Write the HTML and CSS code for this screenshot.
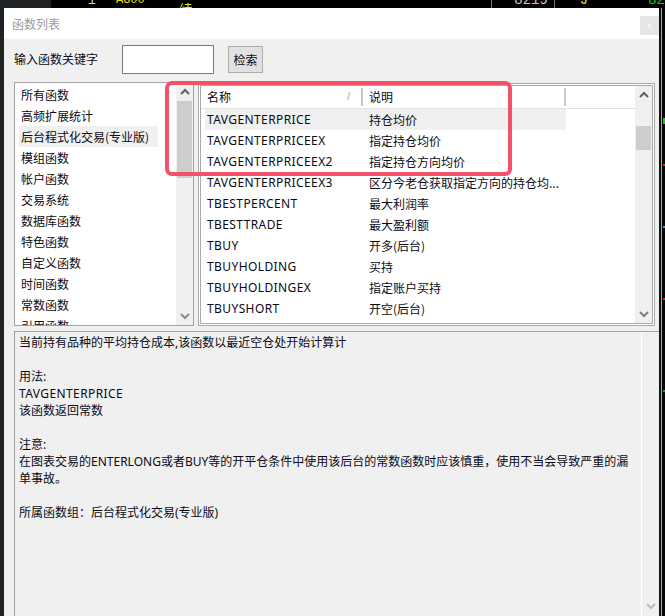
FILE: index.html
```html
<!DOCTYPE html>
<html lang="zh-CN">
<head>
<meta charset="utf-8">
<title>函数列表</title>
<link rel="stylesheet" href="styles.css">
</head>
<body>
<div class="topstrip">
  <div class="ticker">
    <span class="tk-gray"></span>
    <span class="tk-num">1</span>
    <span class="tk-code">AG00</span>
    <span class="tk-name">白银连续</span>
    <span class="tk-bar1"></span>
    <span class="tk-price">8219</span>
    <span class="tk-bar2"></span>
    <span class="tk-j">J</span>
    <span class="tk-g">82</span>
  </div>
</div>
<div class="main">
  <div class="lside"></div>
  <div class="dialog">
    <div class="titlebar">
      <span class="title">函数列表</span>
      <span class="close">x</span>
    </div>
    <div class="search">
      <span class="label">输入函数关键字</span>
      <span class="input"></span>
      <span class="btn">检索</span>
    </div>
    <div class="lists">
      <div class="catlist">
        <div class="catitems">
          <div class="cat">所有函数</div>
          <div class="cat">高频扩展统计</div>
          <div class="cat sel">后台程式化交易(专业版)</div>
          <div class="cat">模组函数</div>
          <div class="cat">帐户函数</div>
          <div class="cat">交易系统</div>
          <div class="cat">数据库函数</div>
          <div class="cat">特色函数</div>
          <div class="cat">自定义函数</div>
          <div class="cat">时间函数</div>
          <div class="cat">常数函数</div>
          <div class="cat">引用函数</div>
        </div>
        <div class="vscroll">
          <span class="arrow"><svg width="10" height="7" viewBox="0 0 10 7"><polyline points="1,6 5,2 9,6" fill="none" stroke="#606060" stroke-width="2"/></svg></span>
          <span class="thumb thumb-left"></span>
          <span class="grow"></span>
          <span class="arrow"><svg width="10" height="7" viewBox="0 0 10 7"><polyline points="1,1 5,5 9,1" fill="none" stroke="#8a8a8a" stroke-width="2"/></svg></span>
        </div>
      </div>
      <div class="fnlist">
        <div class="fninner">
          <div class="fnmain">
            <div class="fnhead">
              <div class="hc hc1"><span>名称</span><span class="sort">/</span></div>
              <div class="hc hc2"><span>说明</span></div>
              <div class="hc hc3"></div>
            </div>
            <div class="rows">
              <div class="row hl"><span class="c1">TAVGENTERPRICE</span><span class="c2">持仓均价</span></div>
              <div class="row"><span class="c1">TAVGENTERPRICEEX</span><span class="c2">指定持仓均价</span></div>
              <div class="row"><span class="c1">TAVGENTERPRICEEX2</span><span class="c2">指定持仓方向均价</span></div>
              <div class="row"><span class="c1">TAVGENTERPRICEEX3</span><span class="c2">区分今老仓获取指定方向的持仓均...</span></div>
              <div class="row"><span class="c1">TBESTPERCENT</span><span class="c2">最大利润率</span></div>
              <div class="row"><span class="c1">TBESTTRADE</span><span class="c2">最大盈利额</span></div>
              <div class="row"><span class="c1">TBUY</span><span class="c2">开多(后台)</span></div>
              <div class="row"><span class="c1">TBUYHOLDING</span><span class="c2">买持</span></div>
              <div class="row"><span class="c1">TBUYHOLDINGEX</span><span class="c2">指定账户买持</span></div>
              <div class="row"><span class="c1">TBUYSHORT</span><span class="c2">开空(后台)</span></div>
            </div>
          </div>
          <div class="vscroll vs2">
            <span class="arrow"><svg width="10" height="7" viewBox="0 0 10 7"><polyline points="1,6 5,2 9,6" fill="none" stroke="#606060" stroke-width="2"/></svg></span>
            <span class="thumb thumb-right"></span>
            <span class="grow"></span>
            <span class="arrow"><svg width="10" height="7" viewBox="0 0 10 7"><polyline points="1,1 5,5 9,1" fill="none" stroke="#808080" stroke-width="2"/></svg></span>
          </div>
        </div>
      </div>
    </div>
    <div class="desc">
      <div class="desctext">当前持有品种的平均持仓成本,该函数以最近空仓处开始计算计

用法:
<span class="lat">TAVGENTERPRICE</span>
该函数返回常数

注意:
在图表交易的ENTERLONG或者BUY等的开平仓条件中使用该后台的常数函数时应该慎重，使用不当会导致严重的漏
单事故。

所属函数组：后台程式化交易(专业版)</div>
      <div class="vscroll vs3">
        <span class="grow"></span>
        <span class="arrow"><svg width="10" height="7" viewBox="0 0 10 7"><polyline points="1,1 5,5 9,1" fill="none" stroke="#bdbdbd" stroke-width="2"/></svg></span>
      </div>
    </div>
  </div>
  <div class="rside">
    <span class="mk mk-g"></span>
    <span class="mk mk-r"></span>
    <span class="mk mk-b"></span>
    <span class="mk mk-r2"></span>
    <span class="mk mk-g2"></span>
  </div>
</div>
<div class="annot"></div>
</body>
</html>
```

FILE: styles.css
```css
* { box-sizing: border-box; }
html, body { margin: 0; padding: 0; }
body {
  width: 665px;
  height: 616px;
  overflow: hidden;
  background: #1f2326;
  font-family: "Noto Sans", "Noto Sans CJK SC", sans-serif;
  font-size: 12px;
  color: #0a0a14;
  position: relative;
}

/* background ticker strip */
.topstrip {
  height: 8px;
  overflow: hidden;
  background: #000;
}
.ticker {
  display: flex;
  align-items: center;
  height: 18px;
  margin-top: -9px;
  font-family: "Liberation Mono", monospace;
  font-size: 14px;
  line-height: 18px;
}
.tk-gray { width: 58px; height: 18px; background: #1f2326; }
.tk-num { color: #c8c8c8; margin-left: 36px; }
.tk-code { color: #e6e600; margin-left: 20px; font-size: 12px; }
.tk-name { color: #e6e600; margin-left: 34px; font-family: "Noto Sans CJK SC", sans-serif; font-size: 14px; }
.tk-bar1 { width: 1px; height: 18px; background: #5b78b8; margin-left: 263px; }
.tk-price { color: #c8c8c8; margin-left: 22px; }
.tk-bar2 { width: 1px; height: 18px; background: #777; margin-left: 6px; }
.tk-j { color: #e6e600; margin-left: 25px; }
.tk-g { color: #19c819; margin-left: 60px; }

.main {
  display: flex;
  height: 608px;
}
.lside { width: 4px; background: #1f2326; }
.rside {
  width: 6px;
  background: #050505;
  display: flex;
  flex-direction: column;
  border-left: 2px solid #111;
  box-shadow: inset 1px 0 0 #9aa6b4;
}
.mk { display: block; width: 3px; height: 2px; margin-left: 2px; }
.mk-g { background: #19c819; margin-top: 110px; height: 6px; }
.mk-r { background: #c83232; margin-top: 40px; }
.mk-b { background: #6f89c0; margin-top: 60px; }
.mk-r2 { background: #c83232; margin-top: 70px; }
.mk-g2 { background: #19a019; margin-top: 90px; }

.dialog {
  width: 655px;
  background: #f0f0f0;
  display: flex;
  flex-direction: column;
}

.titlebar {
  height: 31px;
  background: #fff;
  display: flex;
  align-items: center;
  justify-content: space-between;
  padding-left: 8px;
}
.title {
  color: #9a9a9a;
  font-family: "Noto Sans CJK SC", sans-serif;
  font-size: 12px;
  margin-top: -1px;
}
.close {
  align-self: flex-start;
  margin-top: 8px;
  width: 19px;
  height: 19px;
  background: #e6e6e6;
  color: #fafafa;
  font-size: 11px;
  line-height: 18px;
  text-align: center;
}

.search {
  height: 43px;
  display: flex;
  align-items: flex-start;
  padding: 6px 0 0 10px;
}
.label {
  width: 108px;
  line-height: 28px;
  font-family: "Noto Sans CJK SC", sans-serif;
}
.input {
  width: 92px;
  height: 29px;
  background: #fff;
  border: 1px solid #7a7a7a;
}
.btn {
  margin: 1px 0 0 14px;
  width: 35px;
  height: 27px;
  background: #e1e1e1;
  border: 1px solid #adadad;
  font-family: "Noto Sans CJK SC", sans-serif;
  line-height: 25px;
  text-align: center;
}

.lists {
  display: flex;
  align-items: flex-start;
  padding-left: 10px;
  height: 249px;
}

.catlist {
  width: 180px;
  height: 244px;
  border: 1px solid #a0a0a0;
  background: #fff;
  display: flex;
  overflow: hidden;
}
.catitems {
  flex: 1;
  display: flex;
  flex-direction: column;
  align-items: flex-start;
  padding: 1px 0 0 4px;
  overflow: hidden;
}
.cat {
  height: 21px;
  line-height: 21px;
  padding: 0 9px 0 2px;
  font-family: "Noto Sans CJK SC", sans-serif;
  white-space: nowrap;
  flex: none;
}
.cat.sel { background: #f0f0f0; }

.vscroll {
  width: 17px;
  background: #f0f0f0;
  display: flex;
  flex-direction: column;
  align-items: center;
}
.arrow {
  width: 17px;
  height: 17px;
  display: flex;
  align-items: center;
  justify-content: center;
  flex: none;
}
.grow { flex: 1; }
.thumb { width: 15px; background: #cdcdcd; flex: none; }
.thumb-left { height: 77px; margin-top: 1px; }
.thumb-right { height: 24px; margin-top: 23px; }

.fnlist {
  width: 457px;
  height: 243px;
  margin: 1px 0 0 4px;
  border: 1px solid #a9a9a9;
  background: #fff;
  padding: 1px;
}
.fninner {
  height: 100%;
  border: 1px solid #a9a9a9;
  display: flex;
  overflow: hidden;
}
.fnmain {
  flex: 1;
  display: flex;
  flex-direction: column;
  overflow: hidden;
}
.fnhead {
  height: 23px;
  display: flex;
  border-bottom: 1px solid #e3e3e3;
  flex: none;
}
.hc {
  display: flex;
  align-items: center;
  justify-content: space-between;
  font-family: "Noto Sans CJK SC", sans-serif;
  padding: 0 0 1px 6px;
}
.hc1 { width: 162px; border-right: 2px solid #c9c9c9; margin: 2px 0; padding-right: 11px; }
.hc2 { width: 203px; border-right: 2px solid #c9c9c9; margin: 2px 0; }
.hc3 { flex: 1; }
.sort { color: #9a9a9a; font-size: 10px; font-family: "Liberation Sans", sans-serif; }

.rows {
  display: flex;
  flex-direction: column;
  padding-left: 4px;
}
.row {
  width: 361px;
  height: 21px;
  line-height: 21px;
  display: flex;
  white-space: nowrap;
  flex: none;
}
.row.hl { background: #f0f0f0; }
.c1 { width: 158px; padding-left: 2px; letter-spacing: 0.4px; }
.c2 {
  width: 203px;
  padding-left: 6px;
  font-family: "Noto Sans CJK SC", sans-serif;
  overflow: hidden;
}
.lat { letter-spacing: 0.4px; }

.desc {
  margin: 0 0 0 10px;
  flex: 1;
  border-top: 1px solid #a0a0a0;
  border-left: 1px solid #a0a0a0;
  display: flex;
  overflow: hidden;
}
.desctext {
  flex: 1;
  white-space: pre;
  padding: 2px 0 0 4px;
  line-height: 17px;
  overflow: hidden;
}
.vs3 {
  border-left: 1px solid #fff;
  width: 18px;
  padding-bottom: 1px;
}

/* red annotation frame drawn over the screenshot */
.annot {
  position: absolute;
  left: 165px;
  top: 81px;
  width: 347px;
  height: 95px;
  border: 4px solid #f3506a;
  border-radius: 7px;
}
```
